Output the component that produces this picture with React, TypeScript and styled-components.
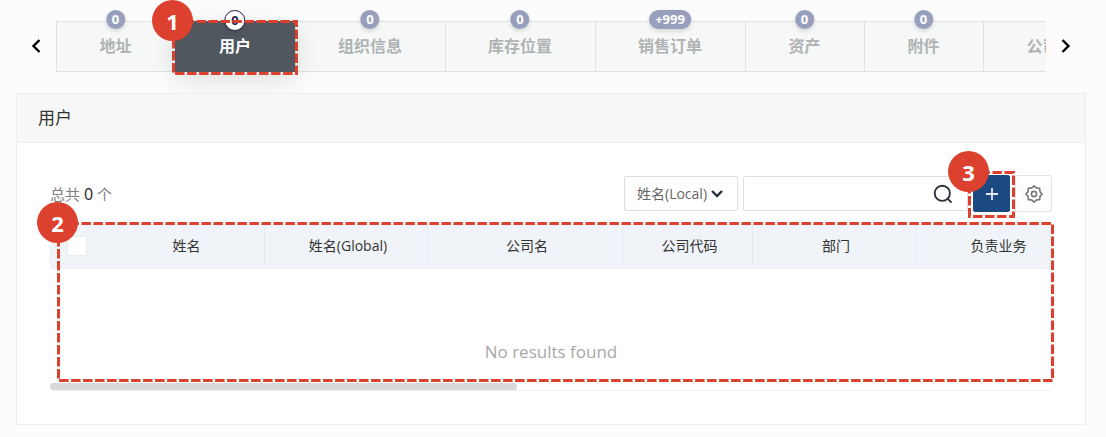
import React from "react";
import styled, { createGlobalStyle, css } from "styled-components";

const GlobalStyle = createGlobalStyle`
  * { box-sizing: border-box; }
  body {
    margin: 0;
    background: #fcfcfc;
    color: #333;
    font-family: "Open Sans", "Noto Sans CJK SC", sans-serif;
    font-size: 14px;
  }
  button, input, select { font: inherit; color: inherit; }
`;

const Page = styled.main`
  padding: 0 20px 12px 16px;
`;

/* ---------- callouts ---------- */

const CalloutFrame = styled.div<{ $inset: string }>`
  position: absolute;
  inset: ${(p) => p.$inset};
  z-index: 5;
  pointer-events: none;
`;

const CalloutOutline = styled.svg`
  display: block;
  width: 100%;
  height: 100%;
  overflow: visible;

  rect {
    x: 1.5px;
    y: 1.5px;
    width: calc(100% - 3px);
    height: calc(100% - 3px);
    fill: none;
    stroke: #dc4130;
    stroke-width: 3px;
    stroke-dasharray: 9.4 2.6;
    stroke-dashoffset: 1;
  }
`;

const CalloutNumber = styled.span`
  position: absolute;
  top: -20px;
  left: -20px;
  display: flex;
  align-items: center;
  justify-content: center;
  width: 41px;
  height: 41px;
  border-radius: 50%;
  background: #dc4130;
  color: #fff;
  font-size: 22px;
  font-weight: 700;
  line-height: 32px;
`;

function Callout({ number, inset }: { number: number; inset: string }) {
  return (
    <CalloutFrame $inset={inset}>
      <CalloutOutline aria-hidden="true">
        <rect />
      </CalloutOutline>
      <CalloutNumber>{number}</CalloutNumber>
    </CalloutFrame>
  );
}

/* ---------- tabs ---------- */

const TabBar = styled.nav`
  display: flex;
`;

const ArrowButton = styled.button`
  display: flex;
  flex: none;
  align-items: center;
  justify-content: center;
  width: 40px;
  padding: 0 0 2px;
  border: 0;
  background: none;
  color: #000;
  cursor: pointer;
`;

/* The vertical padding leaves room for the badges and the active tab's shadow. */
const TabStrip = styled.div`
  display: flex;
  flex: 1;
  min-width: 0;
  padding: 21px 0;
  overflow: hidden;
`;

const TabItem = styled.div<{ $active?: boolean }>`
  position: relative;
  display: flex;
  flex: none;
  z-index: ${(p) => (p.$active ? 2 : 1)};
`;

const TabButton = styled.button<{ $active?: boolean }>`
  min-width: 119px;
  height: 51px;
  padding: 0 43px 2px 42px;
  border: solid #e0e2e2;
  border-width: 1px 0 1px 1px;
  background: #f6f8f8;
  color: #b0b3b4;
  font-size: 16px;
  font-weight: 700;
  line-height: 24px;
  white-space: nowrap;
  cursor: pointer;
  ${(p) =>
    p.$active &&
    css`
      min-width: 120px;
      border-color: #50575e;
      background: #50575e;
      color: #fff;
      box-shadow: 0 8px 24px rgba(0, 0, 0, 0.12);
    `}
`;

const Badge = styled.span<{ $active?: boolean }>`
  position: absolute;
  top: -11px;
  left: 50%;
  transform: translateX(-50%);
  min-width: 19px;
  height: 19px;
  padding: 0 6px;
  border-radius: 10px;
  background: #989fbd;
  box-shadow: 0 2px 4px rgba(0, 0, 0, 0.15);
  color: #fff;
  font-size: 13px;
  font-weight: 700;
  line-height: 19px;
  text-align: center;
  ${(p) =>
    p.$active &&
    css`
      min-width: 21px;
      height: 21px;
      border: 1px solid #23264f;
      border-radius: 11px;
      background: #fff;
      color: #23264f;
    `}
`;

const tabs = [
  { label: "地址", count: "0" },
  { label: "用户", count: "0", active: true },
  { label: "组织信息", count: "0" },
  { label: "库存位置", count: "0" },
  { label: "销售订单", count: "+999" },
  { label: "资产", count: "0" },
  { label: "附件", count: "0" },
  { label: "公司", count: "" },
];

/* ---------- panel ---------- */

const Panel = styled.section`
  border: 1px solid #eee;
  background: #fff;
`;

const PanelTitle = styled.h2`
  margin: 0;
  padding: 0 21px;
  border-bottom: 1px solid #eee;
  background: #f7f7f7;
  font-size: 17px;
  font-weight: 400;
  line-height: 48px;
`;

const PanelBody = styled.div`
  padding: 32px 33px 33px;
`;

const Toolbar = styled.div`
  display: flex;
  align-items: center;
  gap: 5px;
`;

const Total = styled.p`
  margin: 0 auto 0 0;
  color: #808080;
  font-size: 15px;
  line-height: 20px;

  strong {
    color: #222;
    font-size: 16px;
    font-weight: 400;
  }
`;

const Field = styled.div`
  position: relative;
  display: flex;
  color: #2b2f36;
`;

const FieldIcon = styled.svg<{ $right: number }>`
  position: absolute;
  top: 0;
  bottom: 0;
  right: ${(p) => p.$right}px;
  margin: auto 0;
  pointer-events: none;
`;

const controlFrame = css`
  height: 35px;
  border: 1px solid #dadee6;
  border-radius: 2px;
  background: #fff;
  outline-color: #1b4a82;
`;

const FilterSelect = styled.select`
  ${controlFrame}
  width: 114px;
  padding: 0 12px;
  appearance: none;
  color: #666;
`;

const SearchInput = styled.input`
  ${controlFrame}
  width: 225px;
  padding: 0 40px 0 12px;
`;

const IconButton = styled.button<{ $primary?: boolean }>`
  display: flex;
  align-items: center;
  justify-content: center;
  width: 37px;
  height: 37px;
  padding: 0;
  border: 1px solid ${(p) => (p.$primary ? "#1b4a82" : "#e2e2e2")};
  border-radius: 2px;
  background: ${(p) => (p.$primary ? "#1b4a82" : "#fff")};
  color: ${(p) => (p.$primary ? "#e4e9f0" : "#777")};
  cursor: pointer;
`;

const GridArea = styled.div`
  position: relative;
  margin-top: 11px;
`;

const GridClip = styled.div`
  overflow: hidden;
`;

const Grid = styled.table`
  width: 1027px;
  min-width: 100%;
  table-layout: fixed;
  border-collapse: collapse;
`;

const HeadRow = styled.tr`
  height: 46px;
  background: #f0f3f7;
`;

const HeadCell = styled.th<{ $width?: number; $divided?: boolean }>`
  width: ${(p) => (p.$width ? `${p.$width}px` : "auto")};
  padding: 0 0 0 5px;
  background: ${(p) =>
    p.$divided ? "linear-gradient(#e2eaf0, #e2eaf0) 0 0 / 1px 41px no-repeat" : "none"};
  font-weight: 400;
  line-height: 20px;
  text-align: center;
`;

const CheckCell = styled.th`
  width: 54px;
  padding: 0 0 0 17px;
  text-align: left;
`;

const CheckBox = styled.input`
  display: block;
  width: 20px;
  height: 20px;
  margin: 0;
  appearance: none;
  border: 1px solid #e8ebef;
  border-radius: 2px;
  background: #fff;
`;

const EmptyState = styled.p`
  margin: 0;
  padding: 71px 0 19px;
  color: #a8a8a8;
  font-size: 17px;
  line-height: 24px;
  text-align: center;
`;

const ScrollTrack = styled.div`
  height: 8px;
  border-bottom: 1px solid #eee;
  border-radius: 4px;
`;

const ScrollThumb = styled.div<{ $share: number }>`
  width: ${(p) => p.$share}%;
  height: 7px;
  border-radius: 4px;
  background: #d9d9d9;
`;

const columns = [
  { label: "姓名", width: 160 },
  { label: "姓名(Global)", width: 163, divided: true },
  { label: "公司名", width: 195, divided: true },
  { label: "公司代码", width: 130, divided: true },
  { label: "部门", width: 163, divided: true },
  { label: "负责业务", divided: true },
];

function Chevron({ points }: { points: string }) {
  return (
    <svg width="10" height="16" viewBox="0 0 10 16" fill="none" stroke="currentColor" strokeWidth="2.4">
      <polyline points={points} />
    </svg>
  );
}

function GearIcon() {
  return (
    <svg width="18" height="18" viewBox="0 0 18 18" fill="none" stroke="currentColor" strokeWidth="1.6" strokeLinejoin="round">
      <path d="M9 0.9 L11.1 2.9 Q11.5 3.2 12 3.1 L14.7 3.3 L14.9 6 Q14.8 6.5 15.1 6.9 L17.1 9 L15.1 11.1 Q14.8 11.5 14.9 12 L14.7 14.7 L12 14.9 Q11.5 14.8 11.1 15.1 L9 17.1 L6.9 15.1 Q6.5 14.8 6 14.9 L3.3 14.7 L3.1 12 Q3.2 11.5 2.9 11.1 L0.9 9 L2.9 6.9 Q3.2 6.5 3.1 6 L3.3 3.3 L6 3.1 Q6.5 3.2 6.9 2.9 Z" />
      <circle cx="9" cy="9" r="2.6" />
    </svg>
  );
}

export default function App() {
  return (
    <>
      <GlobalStyle />
      <Page>
        <TabBar>
          <ArrowButton aria-label="上一页">
            <Chevron points="8.5,2 2.5,8 8.5,14" />
          </ArrowButton>
          <TabStrip role="tablist">
            {tabs.map((tab) => (
              <TabItem key={tab.label} $active={tab.active}>
                <TabButton role="tab" aria-selected={!!tab.active} $active={tab.active}>
                  {tab.label}
                </TabButton>
                {tab.count && <Badge $active={tab.active}>{tab.count}</Badge>}
                {tab.active && <Callout number={1} inset="-1px -3px -3px -3px" />}
              </TabItem>
            ))}
          </TabStrip>
          <ArrowButton aria-label="下一页">
            <Chevron points="1.5,2 7.5,8 1.5,14" />
          </ArrowButton>
        </TabBar>

        <Panel>
          <PanelTitle>用户</PanelTitle>
          <PanelBody>
            <Toolbar>
              <Total>
                总共 <strong>0</strong> 个
              </Total>
              <Field>
                <FilterSelect aria-label="搜索字段" defaultValue="local">
                  <option value="local">姓名(Local)</option>
                  <option value="global">姓名(Global)</option>
                </FilterSelect>
                <FieldIcon $right={15} width="12" height="8" viewBox="0 0 12 8" fill="none" stroke="currentColor" strokeWidth="2.4">
                  <polyline points="1,1 6,6 11,1" />
                </FieldIcon>
              </Field>
              <Field>
                <SearchInput type="text" aria-label="搜索" />
                <FieldIcon $right={15} width="20" height="20" viewBox="0 0 20 20" fill="none" stroke="currentColor" strokeWidth="1.9">
                  <circle cx="9.3" cy="9.3" r="7.6" />
                  <path d="M14.8 14.8 L18.6 18.6" />
                </FieldIcon>
              </Field>
              <Field>
                <IconButton $primary aria-label="添加">
                  <svg width="12" height="12" viewBox="0 0 12 12" stroke="currentColor" strokeWidth="1.8">
                    <path d="M6 0 V12 M0 6 H12" />
                  </svg>
                </IconButton>
                <Callout number={3} inset="-4px -5px -6px -5px" />
              </Field>
              <IconButton aria-label="设置">
                <GearIcon />
              </IconButton>
            </Toolbar>

            <GridArea>
              <GridClip>
                <Grid>
                  <thead>
                    <HeadRow>
                      <CheckCell>
                        <CheckBox type="checkbox" aria-label="全选" />
                      </CheckCell>
                      {columns.map((column) => (
                        <HeadCell key={column.label} $width={column.width} $divided={column.divided}>
                          {column.label}
                        </HeadCell>
                      ))}
                    </HeadRow>
                  </thead>
                </Grid>
              </GridClip>
              <EmptyState>No results found</EmptyState>
              <ScrollTrack>
                <ScrollThumb $share={46.6} />
              </ScrollTrack>
              <Callout number={2} inset="-1px -2px 9px 7px" />
            </GridArea>
          </PanelBody>
        </Panel>
      </Page>
    </>
  );
}
